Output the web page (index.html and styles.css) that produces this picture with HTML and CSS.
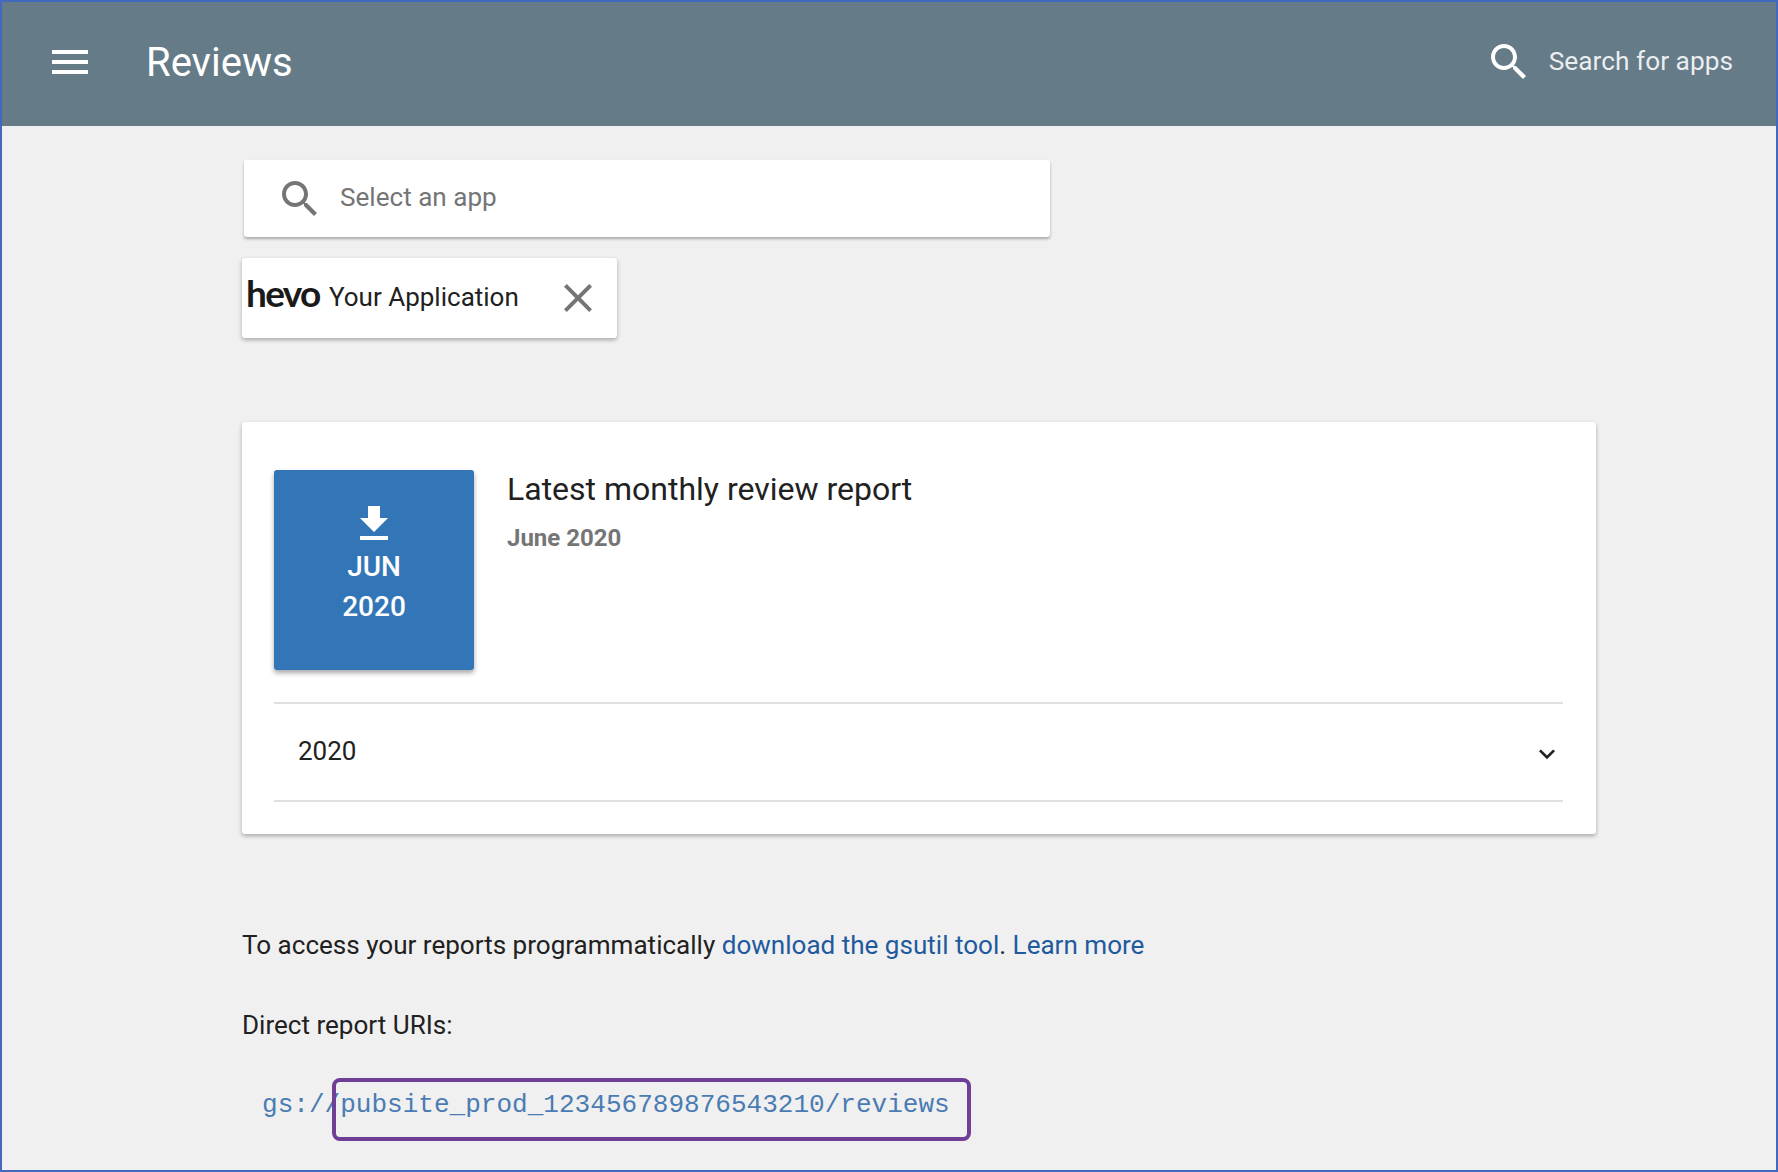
FILE: index.html
```html
<!DOCTYPE html>
<html lang="en">
<head>
<meta charset="utf-8">
<title>Reviews</title>
<link rel="stylesheet" href="styles.css">
</head>
<body>
<div class="frame">
  <header class="appbar">
    <svg class="icon menu" viewBox="0 0 24 24"><path d="M3 18h18v-2H3v2zm0-5h18v-2H3v2zm0-7v2h18V6H3z"/></svg>
    <h1 class="title">Reviews</h1>
    <div class="global-search">
      <svg class="icon" viewBox="0 0 24 24"><path d="M15.5 14h-.79l-.28-.27C15.41 12.59 16 11.11 16 9.5 16 5.91 13.09 3 9.5 3S3 5.91 3 9.5 5.91 16 9.5 16c1.61 0 3.09-.59 4.23-1.57l.27.28v.79l5 4.99L20.49 19l-4.99-5zm-6 0C7.01 14 5 11.99 5 9.5S7.01 5 9.5 5 14 7.01 14 9.5 11.99 14 9.5 14z"/></svg>
      <span class="global-search-label">Search for apps</span>
    </div>
  </header>
  <main class="content">
    <div class="app-select">
      <svg class="icon" viewBox="0 0 24 24"><path d="M15.5 14h-.79l-.28-.27C15.41 12.59 16 11.11 16 9.5 16 5.91 13.09 3 9.5 3S3 5.91 3 9.5 5.91 16 9.5 16c1.61 0 3.09-.59 4.23-1.57l.27.28v.79l5 4.99L20.49 19l-4.99-5zm-6 0C7.01 14 5 11.99 5 9.5S7.01 5 9.5 5 14 7.01 14 9.5 11.99 14 9.5 14z"/></svg>
      <span class="app-select-label">Select an app</span>
    </div>
    <div class="chip">
      <span class="logo">hevo</span>
      <span class="chip-name">Your Application</span>
      <svg class="icon chip-close" viewBox="0 0 24 24"><path d="M19 6.41L17.59 5 12 10.59 6.41 5 5 6.41 10.59 12 5 17.59 6.41 19 12 13.41 17.59 19 19 17.59 13.41 12z"/></svg>
    </div>
    <section class="card">
      <div class="latest">
        <div class="tile">
          <svg class="icon tile-icon" viewBox="0 0 24 24"><path d="M19 9h-4V3H9v6H5l7 7 7-7zM5 18v2h14v-2H5z"/></svg>
          <span class="tile-line">JUN</span>
          <span class="tile-line">2020</span>
        </div>
        <div class="latest-text">
          <h2 class="latest-title">Latest monthly review report</h2>
          <div class="latest-sub">June 2020</div>
        </div>
      </div>
      <div class="year-row">
        <span>2020</span>
        <svg class="chevron" viewBox="0 0 24 24"><path d="M16.59 8.59L12 13.17 7.41 8.59 6 10l6 6 6-6z"/></svg>
      </div>
    </section>
    <p class="line access">To access your reports programmatically <a href="#">download the gsutil tool</a>. <a href="#">Learn more</a></p>
    <p class="line uris">Direct report URIs:</p>
    <p class="uri">gs://<span class="uri-mark">pubsite_prod_123456789876543210/reviews</span></p>
  </main>
</div>
</body>
</html>
```
FILE: styles.css
```css
* { box-sizing: border-box; }
html, body { margin: 0; padding: 0; }
body { font-family: Roboto, "Liberation Sans", sans-serif; color: #212121; background: #f0f0f0; }
.frame {
  height: 1172px;
  overflow: hidden;
  border: 2px solid #4169c0;
  background: #f0f0f0;
}
.icon { width: 48px; height: 48px; flex: none; display: block; fill: currentColor; }
.appbar {
  height: 124px;
  display: flex;
  align-items: center;
  padding: 0 43px 4px 44px;
  background: #667b88;
  color: #fff;
}
.title { margin: 0 0 0 52px; font-size: 40px; font-weight: 400; }
.global-search { margin-left: auto; display: flex; align-items: center; gap: 16px; }
.global-search-label { font-size: 26.3px; color: rgba(255,255,255,.88); position: relative; top: -1px; }
.content { padding: 34px 0 0 240px; }
.app-select {
  width: 806px;
  height: 77px;
  margin-left: 2px;
  display: flex;
  align-items: center;
  gap: 17px;
  padding-left: 32px;
  background: #fff;
  border-radius: 3px;
  box-shadow: 0 2px 3px rgba(0,0,0,.3);
  color: #757575;
  font-size: 26px;
}
.app-select-label { margin-top: -4px; margin-left: -1px; font-size: 26.1px; }
.chip {
  width: 375px;
  height: 80px;
  margin-top: 21px;
  display: flex;
  align-items: center;
  padding-left: 4px;
  background: #fff;
  border-radius: 3px;
  box-shadow: 0 2px 4px rgba(0,0,0,.3);
}
.logo {
  width: 72px;
  margin-top: -12px;
  font-family: Lato, sans-serif;
  font-weight: 700;
  font-size: 37px;
  line-height: 1;
  letter-spacing: -1.7px;
  color: #1a1a1a;
}
.chip-name { margin-left: 11px; margin-top: -2px; font-size: 26px; }
.chip-close { margin-left: 35px; color: #757575; }
.card {
  width: 1354px;
  height: 412px;
  margin-top: 84px;
  padding: 48px 33px 0 32px;
  background: #fff;
  border-radius: 3px;
  box-shadow: 0 2px 4px rgba(0,0,0,.3);
}
.latest { display: flex; gap: 33px; height: 234px; border-bottom: 2px solid #e0e0e0; }
.tile {
  width: 200px;
  height: 200px;
  padding-top: 30px;
  display: flex;
  flex-direction: column;
  align-items: center;
  background: #3276b8;
  border-radius: 3px;
  box-shadow: 0 3px 5px rgba(0,0,0,.35);
  color: #fff;
}
.tile-icon { margin-bottom: -1px; }
.tile-line { font-size: 28px; font-weight: 500; line-height: 40px; }
.latest-title { margin: 0; font-size: 32px; font-weight: 400; line-height: 38px; }
.latest-sub { margin-top: 14px; font-size: 24px; font-weight: 700; color: #757575; line-height: 32px; }
.year-row {
  height: 98px;
  display: flex;
  align-items: center;
  justify-content: space-between;
  padding: 0 0 2px 24px;
  border-bottom: 2px solid #e0e0e0;
  font-size: 26px;
}
.chevron { width: 32px; height: 32px; fill: #212121; flex: none; margin: 6px 0 0; }
.line { margin: 0; font-size: 26.05px; line-height: 34px; }
.line a { color: #1f5a9e; text-decoration: none; }
.access { margin-top: 94px; }
.uris { margin-top: 46px; }
.uri {
  margin: 46px 0 0 20px;
  font-family: "Liberation Mono", monospace;
  font-size: 26.05px;
  line-height: 34px;
  color: #4a7cb3;
}
.uri-mark { position: relative; }
.uri-mark::after {
  content: "";
  position: absolute;
  left: -8px;
  right: -21px;
  top: -12px;
  bottom: -21px;
  border: 4px solid #6f3e96;
  border-radius: 8px;
}
```
